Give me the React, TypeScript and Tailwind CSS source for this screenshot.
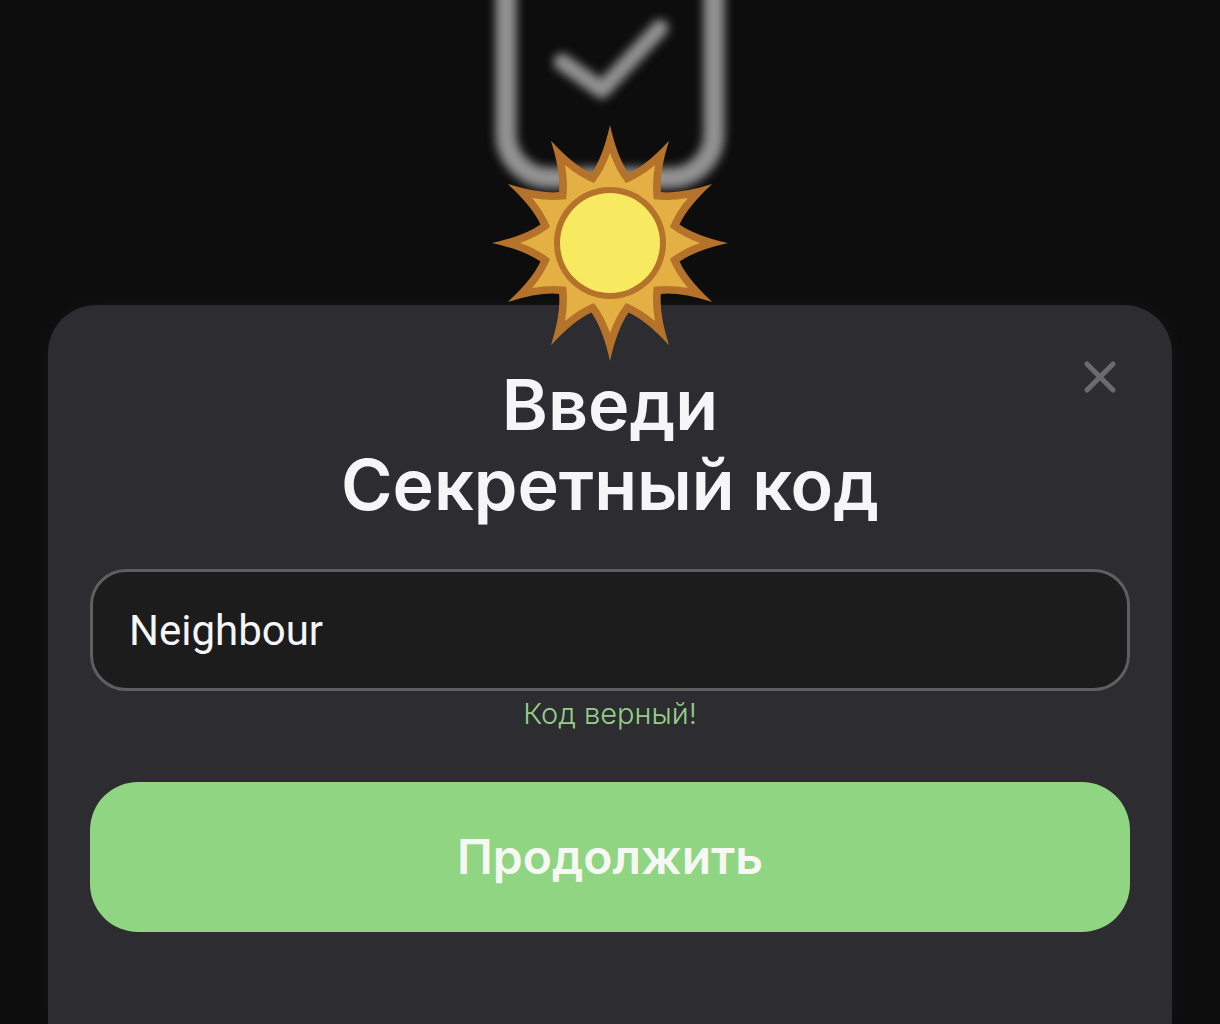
import { X } from 'lucide-react'

// 12 pointed rays with concave sides, drawn around 0,0
function sunPath(outer: number, inner: number, bulge: number) {
  const n = 12
  const pt = (r: number, a: number) => `${(r * Math.sin(a)).toFixed(1)} ${(-r * Math.cos(a)).toFixed(1)}`
  let d = ''
  for (let i = 0; i < n; i++) {
    const a = (i * 2 * Math.PI) / n
    const step = Math.PI / n
    d += `${i === 0 ? 'M' : 'L'}${pt(outer, a)}`
    d += `Q${pt(bulge, a + step * 0.32)} ${pt(inner, a + step)}`
    d += `Q${pt(bulge, a + step * 1.68)} ${pt(outer, a + 2 * step)}`
  }
  return d + 'Z'
}

function Sun() {
  return (
    <svg width="240" height="240" viewBox="-120 -120 240 240">
      <path d={sunPath(118, 72, 86)} fill="#b5722b" />
      <path d={sunPath(90, 62, 73)} fill="#e4b043" />
      <circle r="56" fill="#b5722b" />
      <circle r="50" fill="#f8ea60" />
    </svg>
  )
}

function ShieldBackdrop() {
  return (
    <svg width="240" height="200" viewBox="0 0 240 200" className="overflow-visible blur-[5px]">
      <rect x="16" y="-120" width="208" height="298" rx="44" fill="none" stroke="#929292" strokeWidth="21" />
      <path d="M72 62 L112 90 L170 28" fill="none" stroke="#929292" strokeWidth="17" strokeLinecap="round" strokeLinejoin="round" />
    </svg>
  )
}

export default function App() {
  return (
    <div className="relative h-[1024px] w-[1220px] overflow-hidden bg-[#0d0d0e] font-['Inter',sans-serif]">
      <div className="flex h-[305px] justify-center">
        <ShieldBackdrop />
      </div>

      <div className="absolute left-[490px] top-[123px] z-10">
        <Sun />
      </div>

      <div className="relative mx-12 h-[719px] rounded-t-[48px] bg-[#2c2c31] px-[42px] pt-[60px] shadow-[0_0_24px_rgba(255,255,255,0.035)]">
        <button className="absolute right-[46px] top-[46px] text-[#6b6b6e]">
          <X size={52} strokeWidth={2.4} />
        </button>

        <h1 className="text-center text-[70px] font-semibold leading-[80px] text-[#f6f6f8]">
          Введи
          <br />
          Секретный код
        </h1>

        <div className="mt-[44px] flex h-[122px] items-center rounded-[36px] border-[3px] border-[#5f5f62] bg-[#1c1c1d] pl-[36px]">
          <span className="font-['Roboto',sans-serif] text-[42px] font-[450] text-[#f6f6f8]">Neighbour</span>
        </div>

        <p className="mt-[4px] text-center text-[29px] font-light leading-[38px] text-[#93cf87]">Код верный!</p>

        <button className="mt-[49px] flex h-[150px] w-full items-center justify-center rounded-[48px] bg-[#90d582] text-[48px] font-semibold text-[#f6f8f4]">
          Продолжить
        </button>
      </div>
    </div>
  )
}
